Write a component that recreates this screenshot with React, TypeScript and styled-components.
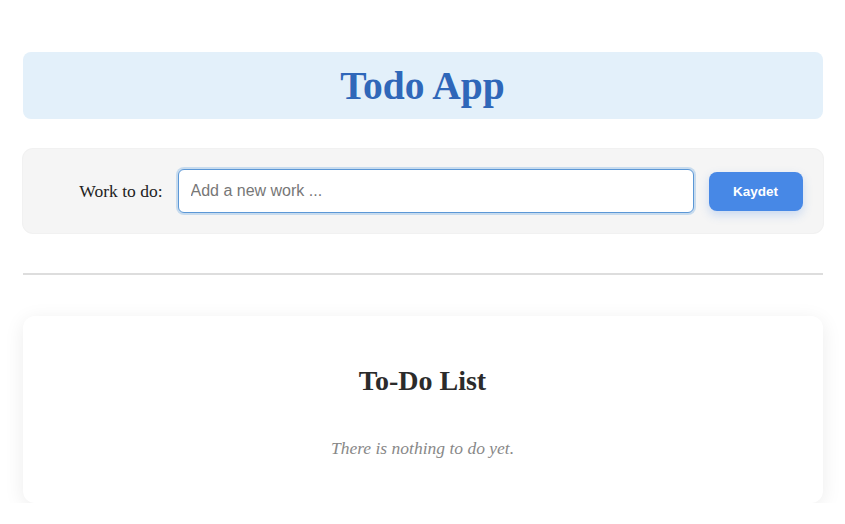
import React from "react";
import styled, { createGlobalStyle } from "styled-components";

const GlobalStyle = createGlobalStyle`
  body {
    margin: 0;
    background: #ffffff;
    font-family: "Liberation Serif", "Times New Roman", serif;
  }
`;

const Page = styled.main`
  max-width: 800px;
  margin: 0 auto;
  padding-top: 52px;
`;

const Header = styled.header`
  height: 67px;
  display: flex;
  align-items: center;
  justify-content: center;
  background-color: #e3f0fa;
  border-radius: 8px;
`;

const Title = styled.h1`
  margin: 0;
  font-size: 39.5px;
  font-weight: bold;
  color: #2f67b9;
`;

const Form = styled.form`
  margin-top: 30px;
  height: 84px;
  box-sizing: border-box;
  padding: 0 20px;
  display: flex;
  align-items: center;
  background-color: #f5f5f5;
  border-radius: 10px;
  box-shadow: 0 0 0 1px #f1f1f1;
`;

const Label = styled.label`
  width: 120px;
  margin-right: 15px;
  text-align: right;
  font-size: 17.5px;
  color: #222;
`;

const Input = styled.input`
  flex: 1;
  height: 44px;
  box-sizing: border-box;
  padding: 0 12px;
  border: 1px solid #5b97d6;
  border-radius: 6px;
  font-family: "Liberation Sans", Arial, sans-serif;
  font-size: 16px;
  color: #333;
  background: #fff;
  box-shadow: 0 0 0 2px #c7dbee;
  outline: none;

  &::placeholder {
    color: #777;
  }
`;

const SaveButton = styled.button`
  margin-left: 15px;
  width: 94px;
  height: 39px;
  border: none;
  border-radius: 8px;
  background-color: #4788e6;
  color: #fff;
  font-family: "Liberation Sans", Arial, sans-serif;
  font-size: 13.5px;
  font-weight: bold;
  box-shadow: 0 4px 10px rgba(71, 136, 230, 0.25);
  cursor: pointer;
`;

const Divider = styled.hr`
  margin: 40px 0 0;
  border: none;
  height: 2px;
  background-color: #dddddd;
`;

const ListCard = styled.section`
  margin-top: 41px;
  height: 187px;
  box-sizing: border-box;
  padding: 49px 40px 0;
  background: #fff;
  border-radius: 12px;
  box-shadow: 0 4px 20px rgba(0, 0, 0, 0.08);
  text-align: center;
`;

const ListTitle = styled.h2`
  margin: 0;
  font-size: 28px;
  line-height: 32px;
  font-weight: bold;
  color: #2b2b2b;
`;

const EmptyText = styled.p`
  margin: 41px 0 0;
  font-size: 17.5px;
  line-height: 20px;
  font-style: italic;
  color: #888;
`;

export default function App() {
  return (
    <>
      <GlobalStyle />
      <Page>
        <Header>
          <Title>Todo App</Title>
        </Header>
        <Form onSubmit={(e) => e.preventDefault()}>
          <Label htmlFor="work">Work to do:</Label>
          <Input id="work" placeholder="Add a new work ..." autoFocus />
          <SaveButton type="submit">Kaydet</SaveButton>
        </Form>
        <Divider />
        <ListCard>
          <ListTitle>To-Do List</ListTitle>
          <EmptyText>There is nothing to do yet.</EmptyText>
        </ListCard>
      </Page>
    </>
  );
}
